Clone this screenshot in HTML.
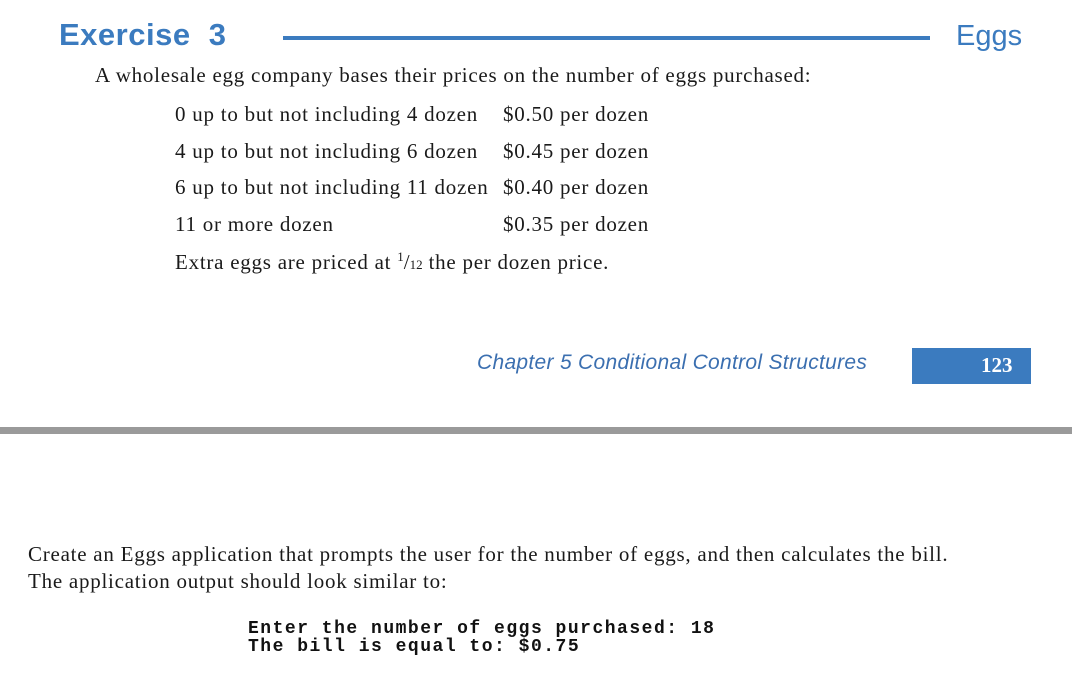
<!DOCTYPE html>
<html><head><meta charset="utf-8"><style>
body{margin:0;width:1072px;height:676px;background:#fff;position:relative;overflow:hidden;font-family:"Liberation Serif",serif;color:#1a1a1a}
.a{position:absolute;white-space:nowrap}
.s{font-size:21px;letter-spacing:0.75px}
.m{font-family:"Liberation Mono",monospace;font-weight:bold;font-size:18px;letter-spacing:1.5px;line-height:18px;color:#111}
</style></head><body>
<div class="a" style="left:59px;top:17px;font-family:'Liberation Sans',sans-serif;font-weight:bold;font-size:31px;color:#3b7bbf;letter-spacing:0.5px">Exercise&nbsp; 3</div>
<div class="a" style="left:283px;top:36px;width:647px;height:4px;background:#3b7bbf"></div>
<div class="a" style="left:956px;top:20px;font-family:'Liberation Sans',sans-serif;font-size:29px;color:#3b7bbf">Eggs</div>
<div class="a s" style="left:95px;top:63px">A wholesale egg company bases their prices on the number of eggs purchased:</div>
<div class="a s" style="left:175px;top:102px">0 up to but not including 4 dozen</div>
<div class="a s" style="left:503px;top:102px">$0.50 per dozen</div>
<div class="a s" style="left:175px;top:139px">4 up to but not including 6 dozen</div>
<div class="a s" style="left:503px;top:139px">$0.45 per dozen</div>
<div class="a s" style="left:175px;top:175px">6 up to but not including 11 dozen</div>
<div class="a s" style="left:503px;top:175px">$0.40 per dozen</div>
<div class="a s" style="left:175px;top:212px">11 or more dozen</div>
<div class="a s" style="left:503px;top:212px">$0.35 per dozen</div>
<div class="a s" style="left:175px;top:249px">Extra eggs are priced at <span style="letter-spacing:0"><sup style="font-size:13px">1</sup>/<span style="font-size:13px">12</span></span> the per dozen price.</div>
<div class="a" style="left:477px;top:351px;font-family:'Liberation Sans',sans-serif;font-style:italic;font-size:21px;color:#3b6fb0;letter-spacing:0.3px">Chapter 5 Conditional Control Structures</div>
<div class="a" style="left:912px;top:348px;width:119px;height:36px;background:#3b7bbf"></div>
<div class="a" style="left:981px;top:353px;font-weight:bold;font-size:21px;color:#fff">123</div>
<div class="a" style="left:0;top:427px;width:1072px;height:7px;background:#9a9a9a"></div>
<div class="a s" style="left:28px;top:542px">Create an Eggs application that prompts the user for the number of eggs, and then calculates the bill.</div>
<div class="a s" style="left:28px;top:569px">The application output should look similar to:</div>
<div class="a m" style="left:248px;top:620px">Enter the number of eggs purchased: 18<br>The bill is equal to: $0.75</div>
</body></html>
